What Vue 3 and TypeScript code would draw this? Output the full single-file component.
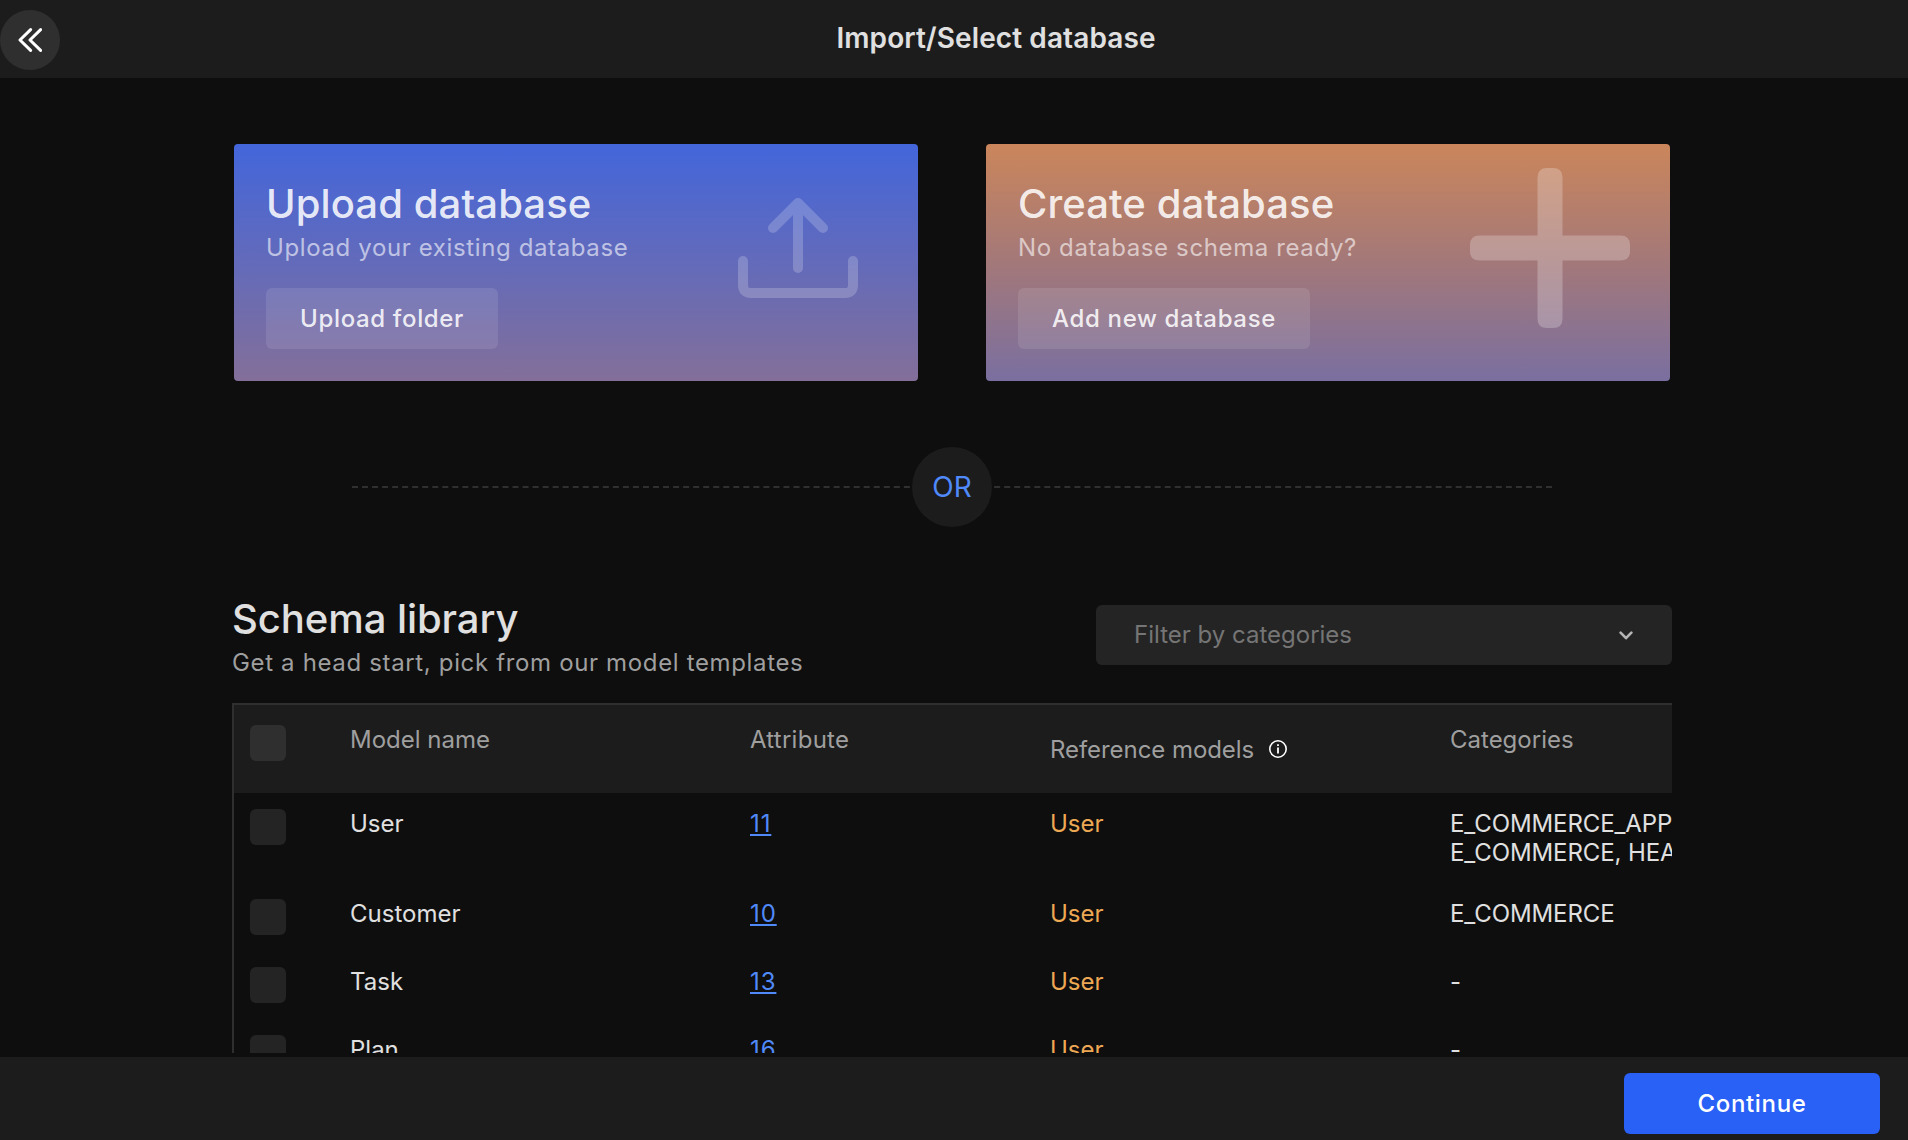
<script setup lang="ts">
interface ModelRow {
  name: string
  attributes: number
  reference: string
  categories: string[]
}

const rows: ModelRow[] = [
  { name: 'User', attributes: 11, reference: 'User', categories: ['E_COMMERCE_APP,', 'E_COMMERCE, HEALTH'] },
  { name: 'Customer', attributes: 10, reference: 'User', categories: ['E_COMMERCE'] },
  { name: 'Task', attributes: 13, reference: 'User', categories: ['-'] },
  { name: 'Plan', attributes: 16, reference: 'User', categories: ['-'] },
]
</script>

<template>
  <div class="page">
    <header class="topbar">
      <button class="back" aria-label="Back">
        <svg width="24" height="24" viewBox="0 0 24 24" fill="none" stroke="#fff" stroke-width="3" stroke-linecap="round" stroke-linejoin="round">
          <path d="M12.6 1.6 2 12l10.6 10.4M22.6 1.6 12 12l10.6 10.4" />
        </svg>
      </button>
      <h1>Import/Select database</h1>
    </header>

    <main class="content">
      <section class="cards">
        <article class="card upload">
          <div>
            <h2>Upload database</h2>
            <p>Upload your existing database</p>
            <button class="ghost">Upload folder</button>
          </div>
          <svg class="art-upload" width="120" height="100" viewBox="0 0 120 100" fill="none" stroke="#fff" stroke-width="10" stroke-linecap="round" stroke-linejoin="round">
            <path d="M60 70V5M35 30 60 5l25 25M5 63v24q0 8 8 8h94q8 0 8-8V63" />
          </svg>
        </article>
        <article class="card create">
          <div>
            <h2>Create database</h2>
            <p>No database schema ready?</p>
            <button class="ghost">Add new database</button>
          </div>
          <svg class="art-plus" width="160" height="160" viewBox="0 0 160 160" fill="#fff">
            <path d="M77 0h6q9.500 0 9.500 9.500V67.500H150.500q9.500 0 9.500 9.500v6q0 9.500-9.500 9.500H92.500V150.500q0 9.500-9.500 9.500h-6q-9.500 0-9.500-9.500V92.500H9.500q-9.500 0-9.500-9.500v-6q0-9.500 9.500-9.500H67.500V9.500Q67.500 0 77 0Z" />
          </svg>
        </article>
      </section>

      <div class="divider">
        <span class="or">OR</span>
      </div>

      <section class="library">
        <div>
          <h2>Schema library</h2>
          <p>Get a head start, pick from our model templates</p>
        </div>
        <div class="select">
          <span>Filter by categories</span>
          <svg width="14" height="9" viewBox="0 0 14 9" fill="none" stroke="#b4b4b4" stroke-width="2.6" stroke-linecap="round" stroke-linejoin="round">
            <path d="M1.600 1.600 7 7.200l5.400-5.600" />
          </svg>
        </div>
      </section>

      <section class="table">
        <div class="row head">
          <span class="cell"><i class="check" /></span>
          <span class="cell">Model name</span>
          <span class="cell attribute">Attribute</span>
          <span class="cell ref">
            Reference models
            <svg width="18" height="18" viewBox="0 0 18 18" fill="none" stroke="#fff">
              <circle cx="9" cy="9" r="8.200" stroke-width="1.600" />
              <path d="M9 7.600v6M9 4.200v1.900" stroke-width="1.800" />
            </svg>
          </span>
          <span class="cell">Categories</span>
        </div>
        <div v-for="row in rows" :key="row.name" class="row">
          <span class="cell"><i class="check" /></span>
          <span class="cell">{{ row.name }}</span>
          <span class="cell"><a>{{ row.attributes }}</a></span>
          <span class="cell model">{{ row.reference }}</span>
          <span class="cell category"><span v-for="line in row.categories" :key="line" class="line">{{ line }}</span></span>
        </div>
      </section>
    </main>

    <footer class="bottombar">
      <button class="continue">Continue</button>
    </footer>
  </div>
</template>

<style>
body {
  background: #0e0e0e;
}
</style>

<style scoped>
.page {
  display: flex;
  flex-direction: column;
  height: 100vh;
  overflow: hidden;
  background: #0e0e0e;
  color: #e0e0e0;
  font-family: Inter, "Liberation Sans", sans-serif;
  font-size: 24px;
  line-height: 29px;
  white-space: nowrap;
}
h1, h2, p {
  margin: 0;
}
button {
  border: 0;
  padding: 0;
  font: inherit;
  color: inherit;
}
svg {
  display: block;
  flex: none;
}
.topbar {
  display: flex;
  align-items: center;
  gap: 24px;
  flex: none;
  height: 78px;
  background: #1c1c1c;
}
.back {
  display: flex;
  align-items: center;
  justify-content: center;
  width: 60px;
  height: 60px;
  margin-top: 2px;
  border-radius: 50%;
  background: #2f2f2f;
}
h1 {
  flex: 1;
  margin-bottom: 2px;
  text-align: center;
  font-size: 28px;
  line-height: 34px;
  font-weight: 600;
  letter-spacing: 0.1px;
}
.content {
  display: flex;
  flex-direction: column;
  flex: 1;
  min-height: 0;
  width: 1440px;
  margin-left: 232px;
  padding-bottom: 4px;
}
.cards {
  display: flex;
  gap: 68px;
  margin: 66px 2px 0;
}
.card {
  display: flex;
  justify-content: space-between;
  box-sizing: border-box;
  width: 684px;
  height: 237px;
  padding: 0 32px;
  border-radius: 4px;
}
.card.upload {
  background: linear-gradient(180deg, #4366db 0%, #836f99 100%);
}
.card.create {
  background: linear-gradient(180deg, #cb865b 0%, #a37879 50%, #7a6fa0 100%);
}
h2 {
  font-size: 40px;
  line-height: 48px;
  font-weight: 500;
}
.card h2 {
  margin-top: 36px;
  letter-spacing: 0.1px;
  color: rgba(255, 255, 255, 0.87);
}
.card p {
  margin-top: 5px;
  letter-spacing: 0.62px;
  color: rgba(255, 255, 255, 0.6);
}
.ghost {
  height: 61px;
  margin-top: 26px;
  padding: 0 34px;
  border-radius: 6px;
  background: rgba(255, 255, 255, 0.1);
  font-weight: 500;
  letter-spacing: 0.66px;
  color: rgba(255, 255, 255, 0.87);
}
.art-upload {
  margin: 54px 28px 0 0;
  opacity: 0.2;
}
.art-plus {
  margin: 24px 8px 0 0;
  opacity: 0.24;
}
.divider {
  display: grid;
  align-items: center;
  justify-items: center;
  align-self: center;
  width: 1200px;
  height: 80px;
  margin-top: 66px;
}
.divider::before {
  content: "";
  grid-area: 1 / 1;
  width: 100%;
  border-top: 2px dashed #303030;
}
.or {
  grid-area: 1 / 1;
  z-index: 1;
  width: 80px;
  height: 80px;
  border-radius: 50%;
  background: #1c1c1c;
  text-align: center;
  font-size: 28px;
  line-height: 80px;
  color: #5089f8;
}
.library {
  display: flex;
  justify-content: space-between;
  height: 108px;
  margin-top: 68px;
}
.library h2 {
  letter-spacing: -0.07px;
  color: #e0e0e0;
}
.library p {
  margin-top: 5px;
  letter-spacing: 0.65px;
  color: #9f9f9f;
}
.select {
  display: flex;
  align-items: center;
  justify-content: space-between;
  box-sizing: border-box;
  width: 576px;
  height: 60px;
  margin-top: 10px;
  padding: 0 39px 0 38px;
  border-radius: 6px;
  background: #242424;
  color: #757575;
}
.select span {
  margin-bottom: 1px;
}
.select svg {
  margin-top: 1px;
}
.table {
  flex: 1;
  min-height: 0;
  overflow: hidden;
  border-top: 2px solid #2f2f2f;
  border-left: 2px solid #2f2f2f;
}
.row {
  display: grid;
  grid-template-columns: 100px 400px 300px 400px 500px;
  align-items: start;
  width: 1716px;
  box-sizing: border-box;
  padding: 16px 0 16px 16px;
}
.head {
  height: 88px;
  padding-top: 20px;
  background: #1c1c1c;
  color: #9f9f9f;
}
.check {
  display: block;
  width: 36px;
  height: 36px;
  border-radius: 6px;
  background: #242424;
}
.head .check {
  background: #2f2f2f;
}
.attribute {
  letter-spacing: 0.25px;
}
.ref {
  display: flex;
  align-items: center;
  gap: 15px;
  height: 48px;
  letter-spacing: -0.06px;
}
.category {
  letter-spacing: -0.1px;
}
.line {
  display: block;
}
a {
  color: #5089f8;
  letter-spacing: 0.9px;
  text-decoration: underline;
}
.model {
  color: #eda854;
}
.bottombar {
  display: flex;
  justify-content: flex-end;
  flex: none;
  height: 67px;
  padding: 16px 28px 0 0;
  background: #1c1c1c;
}
.continue {
  width: 256px;
  height: 61px;
  border-radius: 6px;
  background: #2960f6;
  color: #fff;
  font-weight: 500;
  letter-spacing: 0.66px;
}
</style>
